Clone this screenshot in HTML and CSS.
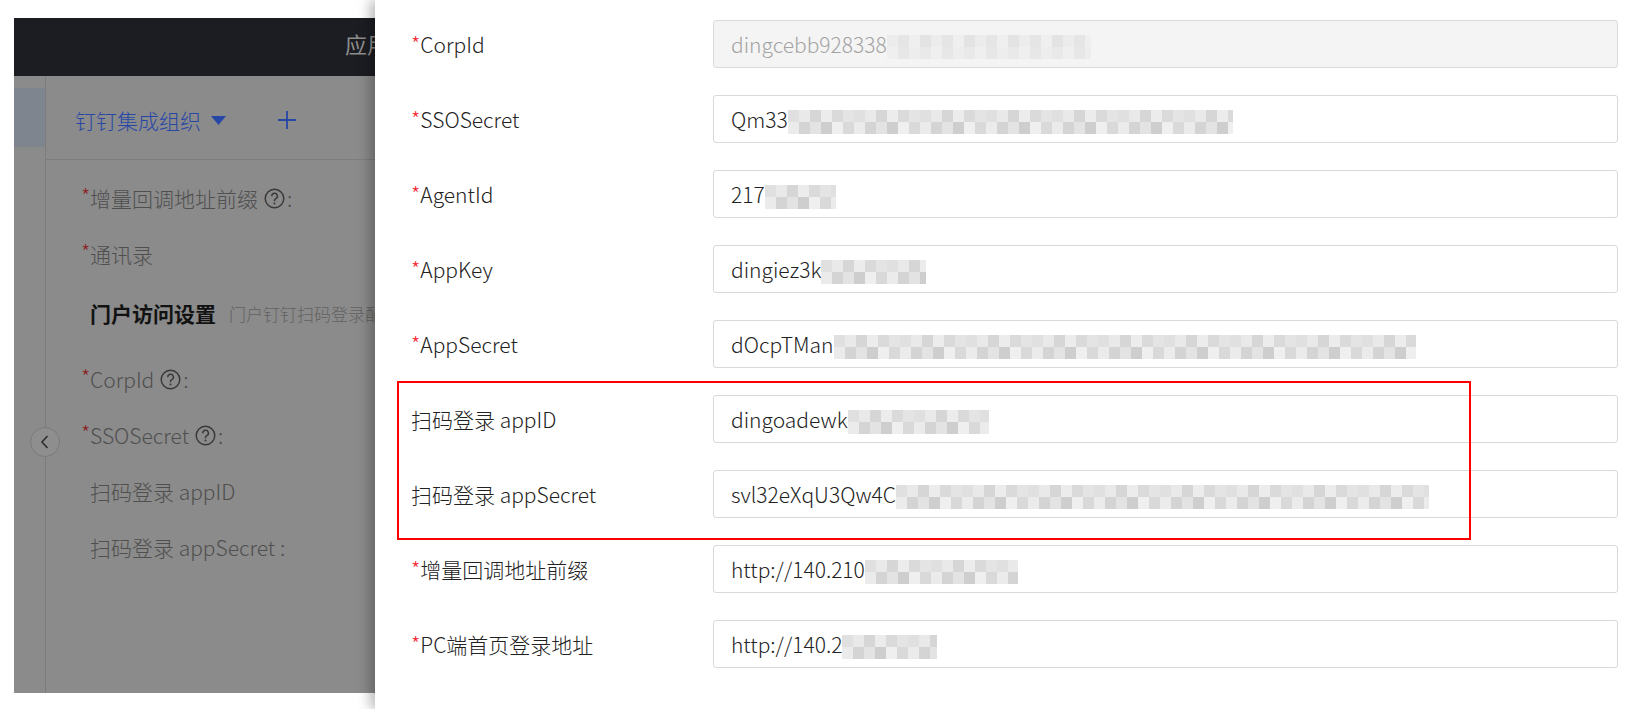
FILE: index.html
```html
<!DOCTYPE html>
<html lang="zh-CN">
<head>
<meta charset="utf-8">
<title>钉钉集成配置</title>
<link rel="stylesheet" href="styles.css">
</head>
<body>
<div class="page">
  <div class="bg-app">
    <div class="app-header"><span class="app-title">应用管理中心</span></div>
    <div class="app-body">
      <div class="app-side">
        <div class="side-active"></div>
        <button class="collapse" type="button" aria-label="收起">
          <svg width="12" height="16" viewBox="0 0 12 16"><path d="M8.5 2 L3 8 L8.5 14" fill="none" stroke="#2a2a2a" stroke-width="1.5"/></svg>
        </button>
      </div>
      <div class="app-main">
        <div class="org-bar">
          <span class="org-name">钉钉集成组织</span>
          <svg class="org-caret" width="15" height="10" viewBox="0 0 15 10"><path d="M0 0 H15 L7.5 9 Z" fill="#2747a6"/></svg>
          <svg class="org-plus" width="18" height="18" viewBox="0 0 18 18"><path d="M9 0 V18 M0 9 H18" stroke="#2747a6" stroke-width="1.8"/></svg>
        </div>
        <div class="bg-form">
          <div class="bg-item req">增量回调地址前缀<svg class="qicon" width="21" height="21" viewBox="0 0 21 21"><circle cx="10.5" cy="10.5" r="9.3" fill="none" stroke="#3a3a3a" stroke-width="1.5"/><path d="M7.8 8.2 A2.8 2.8 0 1 1 11.8 10.6 C10.9 11 10.5 11.6 10.5 12.4 V13.2" fill="none" stroke="#3a3a3a" stroke-width="1.5"/><circle cx="10.5" cy="15.6" r="1" fill="#3a3a3a"/></svg>:</div>
          <div class="bg-item req">通讯录</div>
          <div class="bg-item bg-heading"><span class="bg-heading-title">门户访问设置</span><span class="bg-heading-desc">门户钉钉扫码登录配置</span></div>
          <div class="bg-item req gap">CorpId<svg class="qicon" width="21" height="21" viewBox="0 0 21 21"><circle cx="10.5" cy="10.5" r="9.3" fill="none" stroke="#3a3a3a" stroke-width="1.5"/><path d="M7.8 8.2 A2.8 2.8 0 1 1 11.8 10.6 C10.9 11 10.5 11.6 10.5 12.4 V13.2" fill="none" stroke="#3a3a3a" stroke-width="1.5"/><circle cx="10.5" cy="15.6" r="1" fill="#3a3a3a"/></svg>:</div>
          <div class="bg-item req">SSOSecret<svg class="qicon" width="21" height="21" viewBox="0 0 21 21"><circle cx="10.5" cy="10.5" r="9.3" fill="none" stroke="#3a3a3a" stroke-width="1.5"/><path d="M7.8 8.2 A2.8 2.8 0 1 1 11.8 10.6 C10.9 11 10.5 11.6 10.5 12.4 V13.2" fill="none" stroke="#3a3a3a" stroke-width="1.5"/><circle cx="10.5" cy="15.6" r="1" fill="#3a3a3a"/></svg>:</div>
          <div class="bg-item">扫码登录 appID</div>
          <div class="bg-item">扫码登录 appSecret :</div>
        </div>
      </div>
    </div>
  </div>

  <div class="drawer">
    <div class="form">
      <div class="row"><div class="label req">CorpId</div><div class="input disabled"><span>dingcebb928338</span><span class="mosaic light" style="width:204px"></span></div></div>
      <div class="row"><div class="label req">SSOSecret</div><div class="input"><span>Qm33</span><span class="mosaic" style="width:445px"></span></div></div>
      <div class="row"><div class="label req">AgentId</div><div class="input"><span>217</span><span class="mosaic" style="width:71px"></span></div></div>
      <div class="row"><div class="label req">AppKey</div><div class="input"><span>dingiez3k</span><span class="mosaic" style="width:105px"></span></div></div>
      <div class="row"><div class="label req">AppSecret</div><div class="input"><span>dOcpTMan</span><span class="mosaic" style="width:582px"></span></div></div>
      <div class="row"><div class="label">扫码登录 appID</div><div class="input"><span>dingoadewk</span><span class="mosaic" style="width:141px"></span></div></div>
      <div class="row"><div class="label">扫码登录 appSecret</div><div class="input"><span>svl32eXqU3Qw4C</span><span class="mosaic" style="width:533px"></span></div></div>
      <div class="row"><div class="label req">增量回调地址前缀</div><div class="input"><span>http://140.210</span><span class="mosaic" style="width:153px"></span></div></div>
      <div class="row"><div class="label req">PC端首页登录地址</div><div class="input"><span>http://140.2</span><span class="mosaic" style="width:95px"></span></div></div>
    </div>
    <div class="annot"></div>
  </div>
</div>
</body>
</html>
```

FILE: styles.css
```css
html, body {
  margin: 0;
  padding: 0;
}
body {
  width: 1651px;
  height: 709px;
  overflow: hidden;
  background: #ffffff;
  font-family: "Noto Sans CJK SC", "Noto Sans", sans-serif;
}
.page {
  display: flex;
  height: 709px;
}

/* ---------- background application (under mask) ---------- */
.bg-app {
  width: 361px;
  flex: none;
  margin: 18px 0 16px 14px;
  background: #8b8b8b;
  display: flex;
  flex-direction: column;
  overflow: hidden;
}
.app-header {
  height: 58px;
  flex: none;
  background: #1c1d22;
  display: flex;
  align-items: center;
  padding-left: 331px;
  white-space: nowrap;
  color: #8e8e8e;
  font-size: 22px;
  padding-bottom: 8px;
  box-sizing: border-box;
}
.app-body {
  flex: 1;
  display: flex;
  position: relative;
}
.app-side {
  width: 31px;
  flex: none;
  border-right: 1px solid #7c7c7c;
  padding-top: 12px;
}
.side-active {
  height: 59px;
  background: #7f858f;
}
.collapse {
  position: absolute;
  left: 16px;
  top: 351px;
  width: 30px;
  height: 30px;
  border-radius: 50%;
  border: 1px solid #7a7a7a;
  background: #8e8e8e;
  padding: 0;
  display: flex;
  align-items: center;
  justify-content: center;
}
.app-main {
  flex: 1;
  min-width: 0;
}
.org-bar {
  height: 79px;
  padding-top: 4px;
  border-bottom: 1px solid #7d7d7d;
  display: flex;
  align-items: center;
  padding-left: 29px;
}
.org-name {
  color: #2747a6;
  font-size: 21px;
  font-weight: 300;
}
.org-caret {
  margin-left: 10px;
  margin-top: 2px;
}
.org-plus {
  margin-left: 52px;
}
.bg-form {
  padding-top: 10px;
  padding-left: 35px;
  font-size: 21px;
  font-weight: 300;
  color: #4f4f4f;
  white-space: nowrap;
}
.bg-item {
  height: 56px;
  display: flex;
  align-items: center;
  padding-left: 9px;
}
.bg-item.req {
  padding-left: 0;
}
.bg-item.req::before {
  content: "*";
  color: #8a1f1f;
  width: 9px;
  align-self: center;
  margin-top: -4px;
}
.qicon {
  margin: 0 2px 0 6px;
}
.bg-heading {
  margin-top: 3px;
}
.bg-heading-title {
  font-weight: 700;
  color: #121212;
}
.bg-heading-desc {
  font-size: 17px;
  color: #626262;
  margin-left: 13px;
}
.bg-item.gap {
  margin-top: 10px;
}

/* ---------- drawer ---------- */
.drawer {
  flex: 1;
  position: relative;
  background: #ffffff;
  box-shadow: -5px 0 12px rgba(0, 0, 0, 0.28);
}
.form {
  padding: 20px 33px 0 36px;
  display: flex;
  flex-direction: column;
  gap: 27px;
}
.row {
  height: 48px;
  display: flex;
  align-items: center;
}
.label {
  width: 302px;
  flex: none;
  font-size: 21px;
  font-weight: 300;
  color: #222222;
  white-space: nowrap;
}
.label.req::before {
  content: "*";
  color: #f5222d;
}
.input {
  flex: 1;
  height: 48px;
  box-sizing: border-box;
  border: 1px solid #d9d9d9;
  border-radius: 3px;
  padding: 0 17px;
  display: flex;
  align-items: center;
  font-size: 21px;
  font-weight: 300;
  color: #222222;
  white-space: nowrap;
  overflow: hidden;
}
.input.disabled {
  background: #f4f4f4;
  color: #a3a3a3;
}
.mosaic {
  height: 24px;
  flex: none;
  margin-top: 6px;
  background:
    repeating-linear-gradient(90deg, #e0e0e0 0 11px, #e9e9e9 11px 22px, #d6d6d6 22px 33px, #ececec 33px 44px, #dadada 44px 55px, #e4e4e4 55px 66px) top / 100% 50% no-repeat,
    repeating-linear-gradient(90deg, #ebebeb 0 11px, #d4d4d4 11px 22px, #e3e3e3 22px 33px, #cecece 33px 44px, #efefef 44px 55px, #d9d9d9 55px 66px) bottom / 100% 50% no-repeat;
}
.mosaic.light {
  background:
    repeating-linear-gradient(90deg, #ececec 0 11px, #e5e5e5 11px 22px, #efefef 22px 33px, #e3e3e3 33px 44px) top / 100% 50% no-repeat,
    repeating-linear-gradient(90deg, #efefef 0 11px, #e7e7e7 11px 22px, #ededed 22px 33px, #e9e9e9 33px 44px) bottom / 100% 50% no-repeat;
}
.annot {
  position: absolute;
  left: 22px;
  top: 381px;
  width: 1074px;
  height: 159px;
  box-sizing: border-box;
  border: 2px solid #ff0000;
  pointer-events: none;
}
```
